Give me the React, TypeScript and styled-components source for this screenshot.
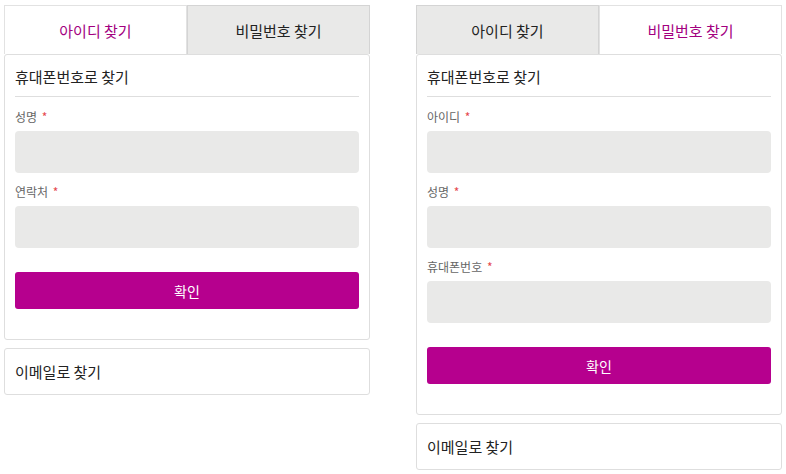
import React, { useState } from 'react';
import styled, { createGlobalStyle } from 'styled-components';

const GlobalStyle = createGlobalStyle`
  body {
    margin: 0;
    background: #fff;
    font-family: 'Noto Sans CJK KR', 'Noto Sans', sans-serif;
    color: #222;
  }
`;

type Field = { label: string };

const Find = ({ defaultTab, fields }: { defaultTab: number; fields: Field[] }) => {
  const [tab, setTab] = useState(defaultTab);

  return (
    <Panel>
      <Tabs>
        <Tab $active={tab === 0} onClick={() => setTab(0)}>
          아이디 찾기
        </Tab>
        <Tab $active={tab === 1} onClick={() => setTab(1)}>
          비밀번호 찾기
        </Tab>
      </Tabs>
      <Card>
        <CardTitle>휴대폰번호로 찾기</CardTitle>
        <Form>
          {fields.map((f) => (
            <FieldBox key={f.label}>
              <Label>
                {f.label} <Star>*</Star>
              </Label>
              <Input />
            </FieldBox>
          ))}
          <Submit type="button">확인</Submit>
        </Form>
      </Card>
      <EmailCard>이메일로 찾기</EmailCard>
    </Panel>
  );
};

const App = () => {
  return (
    <>
      <GlobalStyle />
      <Page>
        <Find defaultTab={0} fields={[{ label: '성명' }, { label: '연락처' }]} />
        <Find
          defaultTab={1}
          fields={[{ label: '아이디' }, { label: '성명' }, { label: '휴대폰번호' }]}
        />
      </Page>
    </>
  );
};

export default App;

const Page = styled.div`
  display: flex;
  justify-content: space-between;
  align-items: flex-start;
  padding: 5px 4px 0;
`;

const Panel = styled.div`
  width: 366px;
`;

const Tabs = styled.div`
  display: flex;
`;

const Tab = styled.button<{ $active: boolean }>`
  flex: 1;
  height: 49px;
  margin: 0;
  padding: 0;
  font-family: inherit;
  font-size: 15px;
  cursor: pointer;
  color: ${(p) => (p.$active ? '#a3007f' : '#222')};
  background: ${(p) => (p.$active ? '#fff' : '#e9e9e8')};
  border: 1px solid ${(p) => (p.$active ? '#e2e2e2' : '#d4d4d4')};
  border-bottom: none;
`;

const Card = styled.div`
  border: 1px solid #dedede;
  border-radius: 3px;
  padding: 0 10px 30px;
`;

const CardTitle = styled.h3`
  margin: 0;
  font-size: 15px;
  font-weight: 400;
  line-height: 20px;
  padding: 12px 0 9px;
  border-bottom: 1px solid #dedede;
`;

const Form = styled.div`
  display: flex;
  flex-direction: column;
  padding-top: 11px;
`;

const FieldBox = styled.div`
  display: flex;
  flex-direction: column;
  margin-bottom: 10px;
`;

const Label = styled.label`
  font-size: 12px;
  line-height: 18px;
  color: #666;
  margin-bottom: 5px;
`;

const Star = styled.span`
  color: #e5484d;
  margin-left: 2px;
`;

const Input = styled.input`
  height: 42px;
  box-sizing: border-box;
  border: none;
  border-radius: 4px;
  background: #e9e9e8;
  outline: none;
`;

const Submit = styled.button`
  height: 37px;
  margin-top: 14px;
  border: none;
  border-radius: 3px;
  background: #b6008e;
  color: #fff;
  font-family: inherit;
  font-size: 14px;
  cursor: pointer;
`;

const EmailCard = styled.div`
  margin-top: 8px;
  border: 1px solid #dedede;
  border-radius: 3px;
  height: 45px;
  padding: 0 10px;
  display: flex;
  align-items: center;
  font-size: 15px;
`;
